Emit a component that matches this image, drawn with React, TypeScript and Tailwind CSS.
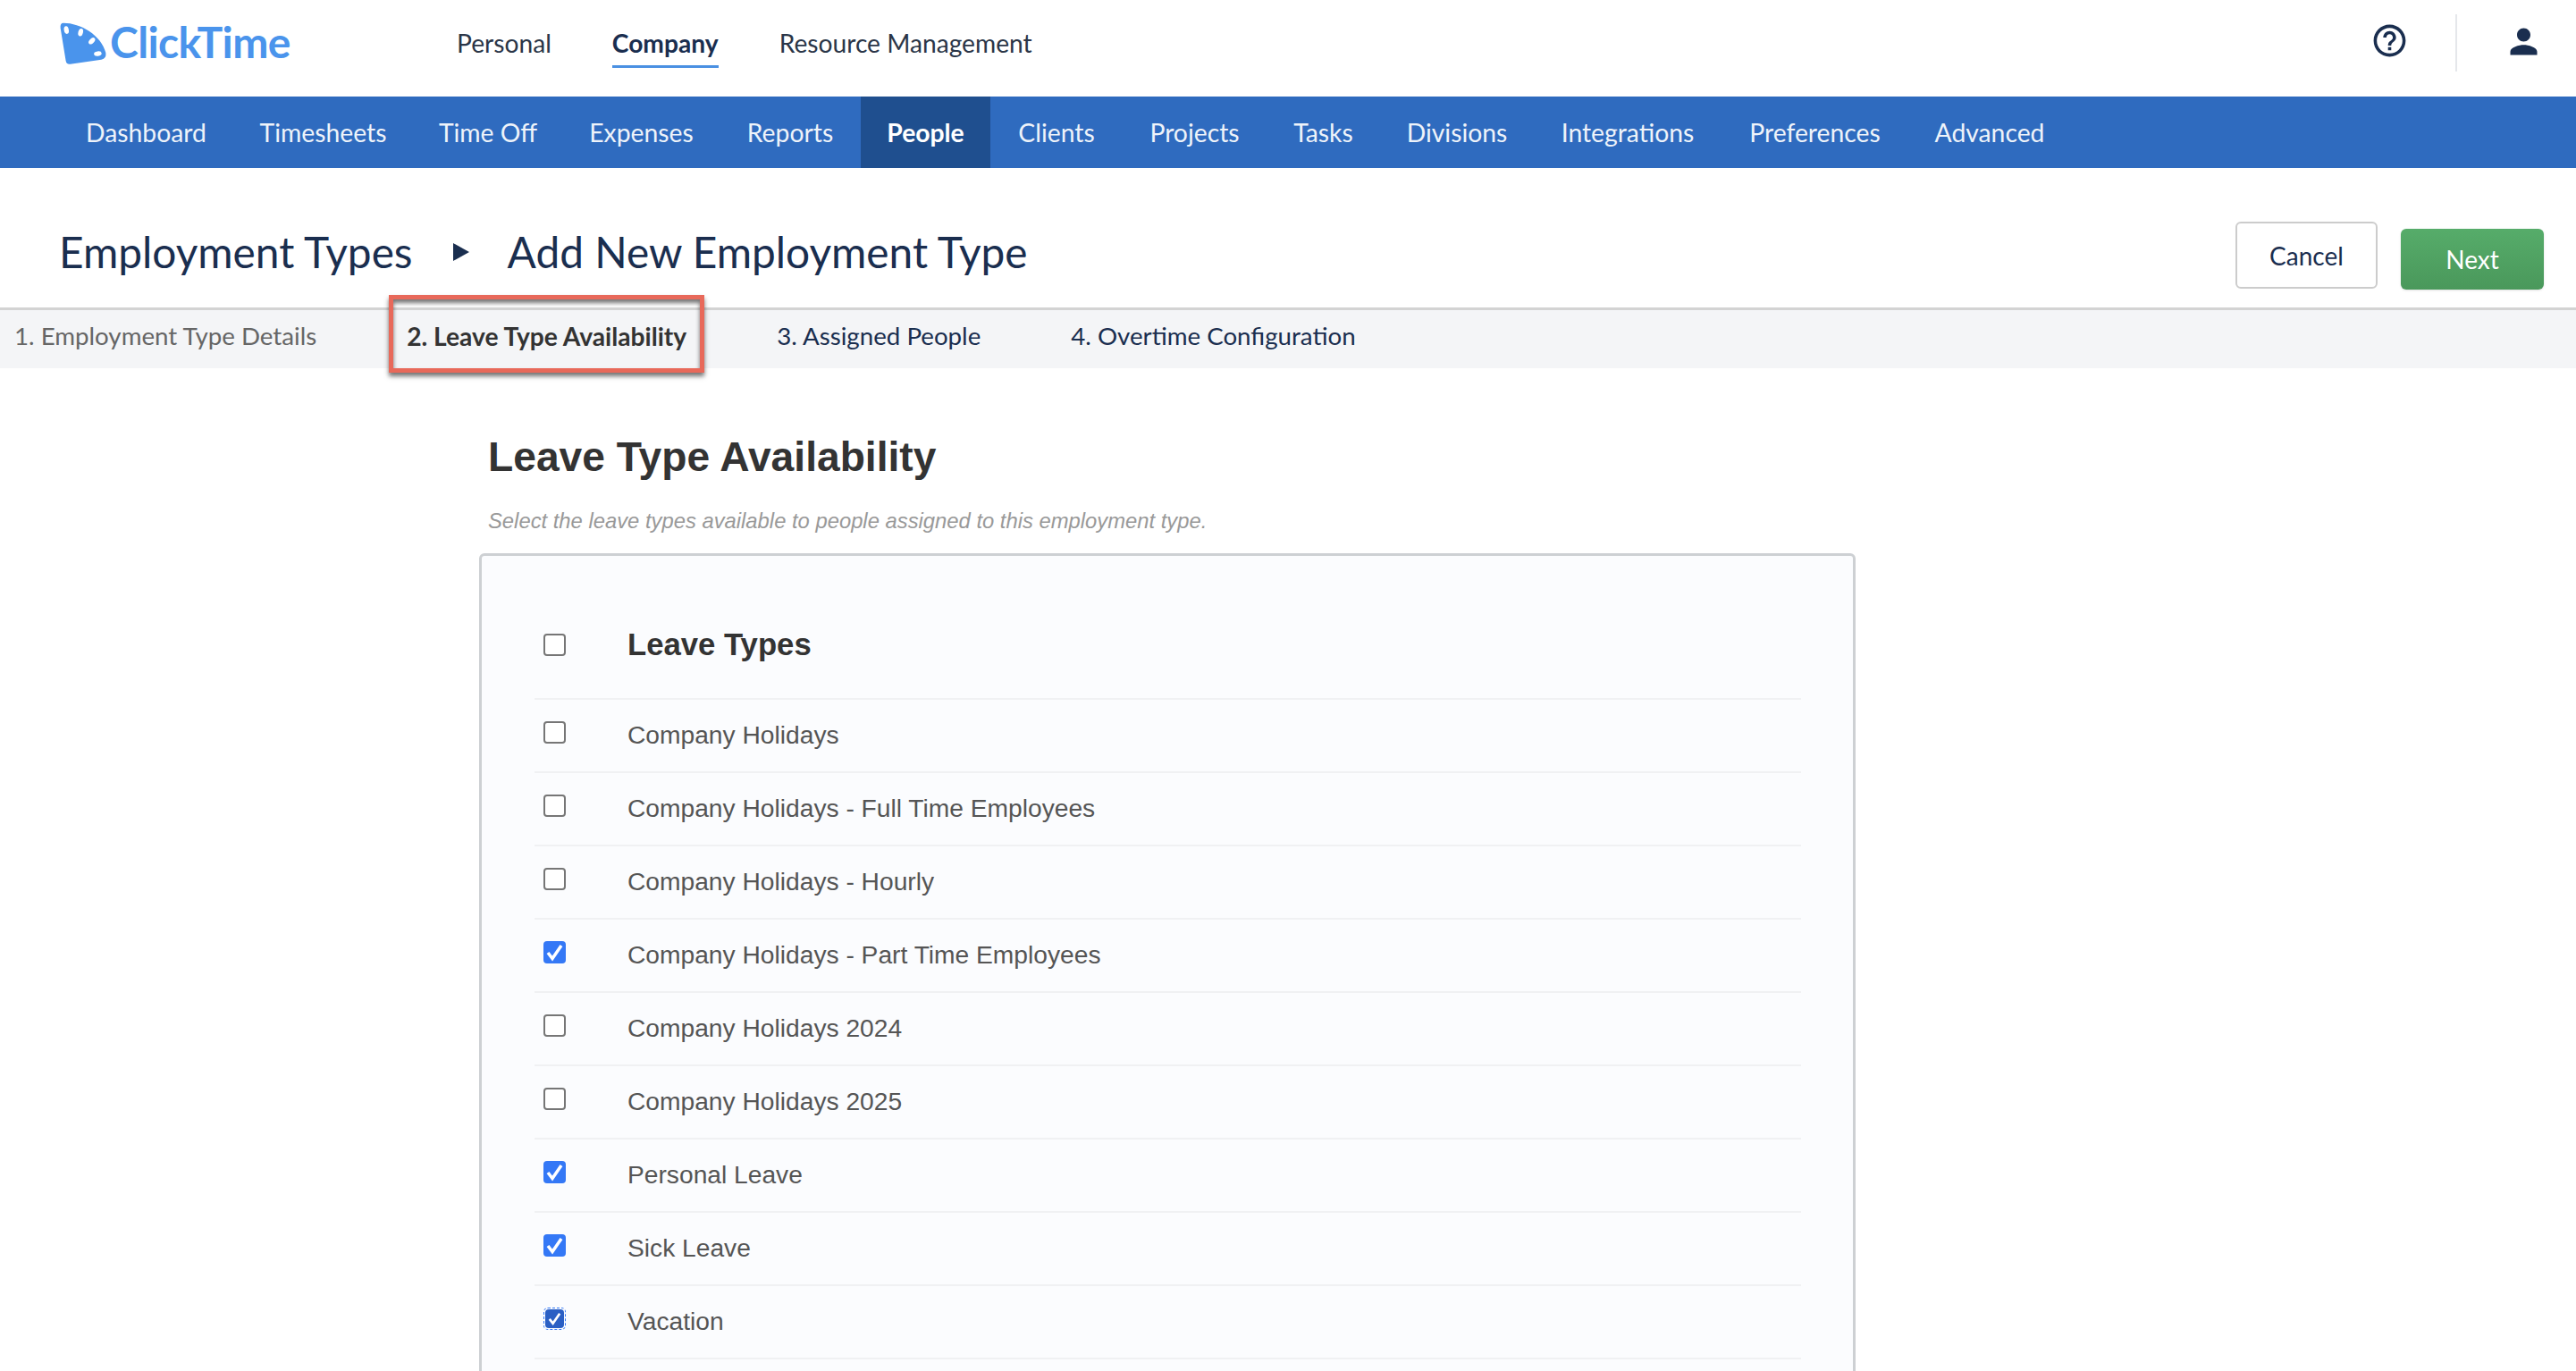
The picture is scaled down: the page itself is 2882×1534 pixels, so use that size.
import { MdHelpOutline, MdPerson } from "react-icons/md";

const topLinks = ["Personal", "Company", "Resource Management"];
const navItems = [
  { label: "Dashboard", className: "w-[195px]" },
  { label: "Timesheets", className: "w-[201px]" },
  { label: "Time Off", className: "w-[168px]" },
  { label: "Expenses", className: "w-[175px]" },
  { label: "Reports", className: "w-[158px]" },
  { label: "People", className: "w-[145px] bg-[#1f4f8f] font-bold text-white" },
  { label: "Clients", className: "w-[148px]" },
  { label: "Projects", className: "w-[161px]" },
  { label: "Tasks", className: "w-[127px]" },
  { label: "Divisions", className: "w-[172px]" },
  { label: "Integrations", className: "w-[210px]" },
  { label: "Preferences", className: "w-[209px]" },
  { label: "Advanced", className: "w-[182px]" },
];
const tabs = ["1. Employment Type Details", "2. Leave Type Availability", "3. Assigned People", "4. Overtime Configuration"];
const leaveTypes = [
  { name: "Company Holidays", checked: false },
  { name: "Company Holidays - Full Time Employees", checked: false },
  { name: "Company Holidays - Hourly", checked: false },
  { name: "Company Holidays - Part Time Employees", checked: true },
  { name: "Company Holidays 2024", checked: false },
  { name: "Company Holidays 2025", checked: false },
  { name: "Personal Leave", checked: true },
  { name: "Sick Leave", checked: true },
  { name: "Vacation", checked: true, focused: true },
];

function Logo() {
  return (
    <div className="flex w-[259px] items-center">
      <svg width="53" height="49" viewBox="50 40 160 146" className="shrink-0">
        <path d="M62 44C120 44 190 85 205 145Q208 165 190 168L85 183Q72 185 70 172L52 62Q50 44 62 44Z" fill="#4a94ec" />
        <ellipse cx="72" cy="68" rx="8" ry="13" transform="rotate(-10 72 68)" fill="#fff" />
        <ellipse cx="120" cy="76" rx="8" ry="13" transform="rotate(15 120 76)" fill="#fff" />
        <ellipse cx="158" cy="105" rx="8" ry="13" transform="rotate(45 158 105)" fill="#fff" />
        <ellipse cx="178" cy="148" rx="13" ry="8" transform="rotate(-8 178 148)" fill="#fff" />
      </svg>
      <span className="ml-[3px] -mt-[2px] font-['Lato',sans-serif] text-[48px] leading-none font-bold tracking-[-0.6px] text-[#4a94ec]">ClickTime</span>
    </div>
  );
}

function Checkbox({ checked, focused }: { checked?: boolean; focused?: boolean }) {
  if (checked) {
    return (
      <span className="relative flex h-[25px] w-[25px] shrink-0 items-center justify-center">
        {focused && <span className="absolute inset-0 rounded-[5px] border border-dashed border-[#3478f6]" />}
        <span className={focused ? "flex h-[21px] w-[21px] items-center justify-center rounded-[4px] bg-[#2a5fc4]" : "flex h-[25px] w-[25px] items-center justify-center rounded-[4px] bg-[#3478f6]"}>
          <svg width={focused ? 19 : 25} height={focused ? 19 : 25} viewBox="0 0 25 25" fill="none">
            <path d="M5 13L10 19.5L20 5" stroke="#fff" strokeWidth="3.5" />
          </svg>
        </span>
      </span>
    );
  }
  return <span className="block h-[25px] w-[25px] shrink-0 rounded-[4px] border-2 border-[#767676] bg-white" />;
}

export default function App() {
  return (
    <div className="h-screen overflow-hidden bg-white font-['Lato',sans-serif] text-[#1a2e4f]">
      {/* top bar */}
      <div className="flex h-[108px] items-center pr-[36px] pb-[12px] pl-[67px]">
        <Logo />
        <div className="ml-[185px] flex gap-[68px] text-[28.2px]">
          {topLinks.map((link) =>
            link === "Company" ? (
              <span key={link} className="relative leading-[35px] font-bold">
                {link}
                <span className="absolute right-0 -bottom-[10px] left-0 h-[3px] bg-[#4a90e2]" />
              </span>
            ) : (
              <span key={link} className="leading-[35px] text-[#2b3648]">{link}</span>
            ),
          )}
        </div>
        <div className="ml-auto flex items-center gap-[52px]">
          <MdHelpOutline size={43} className="-mt-[6px]" />
          <div className="h-[64px] w-[2px] bg-[#e5e7eb]" />
          <MdPerson size={45} className="-mt-[4px]" />
        </div>
      </div>

      {/* main nav */}
      <div className="flex h-[80px] items-stretch bg-[#2f6bbf] pl-[66px] text-[28.3px] text-[#eef3fa]">
        {navItems.map((item) => (
          <div key={item.label} className={`flex items-center justify-center ${item.className}`}>
            {item.label}
          </div>
        ))}
      </div>

      {/* page title */}
      <div className="flex h-[156px] items-start justify-between pr-[36px] pl-[66px]">
        <div className="mt-[65px] flex items-center text-[47.8px] leading-[58px]">
          <span>Employment Types</span>
          <svg width="20" height="22" viewBox="0 0 20 22" className="mr-[42px] ml-[44px]">
            <path d="M1 1L19 11L1 21Z" fill="#1a2e4f" />
          </svg>
          <span>Add New Employment Type</span>
        </div>
        <div className="flex items-start gap-[26px] text-[28px]">
          <div className="mt-[60px] flex h-[75px] w-[159px] items-center justify-center rounded-[6px] border-2 border-[#ccc]">Cancel</div>
          <div className="mt-[68px] flex h-[68px] w-[160px] items-center justify-center rounded-[6px] bg-gradient-to-b from-[#56ac6a] to-[#4a985b] text-white shadow-sm">Next</div>
        </div>
      </div>

      {/* wizard steps */}
      <div className="flex h-[68px] items-center border-t-[3px] border-[#d3d3d3] bg-[#f4f5f7] pb-[7px] pl-[16px] text-[27.7px]">
        {tabs.map((tab, i) => (
          <div key={tab} className={i === 0 ? "mr-[101px] text-[#666]" : i === 1 ? "relative mr-[101px] text-[28.2px] font-bold text-[#333]" : "mr-[101px]"}>
            {tab}
            {i === 1 && (
              <span className="absolute -top-[25px] -right-[20px] -bottom-[20px] -left-[20px] border-[5px] border-[#e8695a] shadow-[0_4px_5px_rgba(0,0,0,0.55),inset_0_4px_5px_rgba(0,0,0,0.55)]" />
            )}
          </div>
        ))}
      </div>

      {/* content */}
      <div className="pl-[536px] font-['Liberation_Sans',sans-serif]">
        <h1 className="mt-[71px] ml-[10px] text-[46.2px] leading-[56px] font-bold text-[#333]">Leave Type Availability</h1>
        <p className="mt-[30px] ml-[10px] text-[23.8px] leading-[28px] text-[#999] italic">Select the leave types available to people assigned to this employment type.</p>
        <div className="mt-[22px] w-[1540px] rounded-t-[6px] border-[3px] border-[#cdd0d3] bg-[#fbfcfe] pt-[40px] pr-[58px] pb-[100px] pl-[59px]">
          <div className="flex h-[121px] items-center border-b-2 border-[#f0f1f3] pl-[10px]">
            <span className="mb-[1px] block"><Checkbox /></span>
            <span className="ml-[69px] text-[34.7px] font-bold text-[#333]">Leave Types</span>
          </div>
          {leaveTypes.map((row) => (
            <div key={row.name} className="flex h-[82px] items-center border-b-2 border-[#f0f1f3] pl-[10px]">
              <span className="mb-[8px] block"><Checkbox checked={row.checked} focused={row.focused} /></span>
              <span className="mb-[1px] ml-[69px] text-[28.2px] text-[#555]">{row.name}</span>
            </div>
          ))}
        </div>
      </div>
    </div>
  );
}
